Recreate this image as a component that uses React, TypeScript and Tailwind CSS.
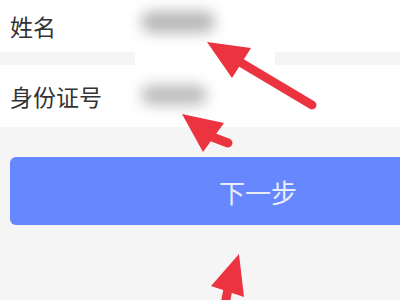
import React from 'react';

const Arrow: React.FC<{ tail: [number, number]; tip: [number, number]; wingA: [number, number]; wingB: [number, number] }> = ({ tail, tip, wingA, wingB }) => {
    const neck: [number, number] = [(wingA[0] + wingB[0]) / 2, (wingA[1] + wingB[1]) / 2];
    return (
        <g>
            <line x1={tail[0]} y1={tail[1]} x2={neck[0]} y2={neck[1]} stroke="#ec3340" strokeWidth="9" strokeLinecap="round" />
            <polygon points={`${tip[0]},${tip[1]} ${wingA[0]},${wingA[1]} ${wingB[0]},${wingB[1]}`} fill="#ec3340" />
        </g>
    );
};

export default function App() {
    return (
        <div className="relative flex h-[300px] w-[400px] flex-col overflow-hidden bg-[#f5f5f5]" style={{ fontFamily: '"Noto Sans CJK SC", "Noto Sans", sans-serif' }}>
            {/* Form rows */}
            <div className="flex flex-col gap-[13px]">
                <div className="flex h-[52px] items-center bg-white px-[10px]">
                    <span className="text-[23px] text-[#333]">姓名</span>
                </div>
                <div className="flex h-[62px] items-center bg-white px-[10px]">
                    <span className="text-[23px] text-[#333]">身份证号</span>
                </div>
            </div>

            {/* Next button */}
            <div className="pl-[10px] pt-[30px]">
                <div className="flex h-[68px] w-[496px] items-center justify-center rounded-[6px] bg-[#6687fd]">
                    <span className="text-[26px] text-[#e9edfb]">下一步</span>
                </div>
            </div>

            {/* Blurred values (mosaic over the inputs) */}
            <div className="absolute left-[135px] top-0 h-[127px] w-[140px] bg-white">
                <div className="absolute left-[6px] top-[11px] h-[22px] w-[74px] rounded-full bg-[#b8b8b8] blur-[7px]" />
                <div className="absolute left-[6px] top-[85px] h-[20px] w-[66px] rounded-full bg-[#bcbcbc] blur-[7px]" />
            </div>

            {/* Annotation arrows */}
            <svg className="absolute left-0 top-0" width="400" height="300" viewBox="0 0 400 300">
                <Arrow tail={[312, 105]} tip={[207, 42]} wingA={[251, 48]} wingB={[232, 78]} />
                <Arrow tail={[228, 143]} tip={[182, 114]} wingA={[224, 123]} wingB={[203, 152]} />
                <Arrow tail={[222, 320]} tip={[239, 254]} wingA={[211, 286]} wingB={[244, 297]} />
            </svg>
        </div>
    );
}
